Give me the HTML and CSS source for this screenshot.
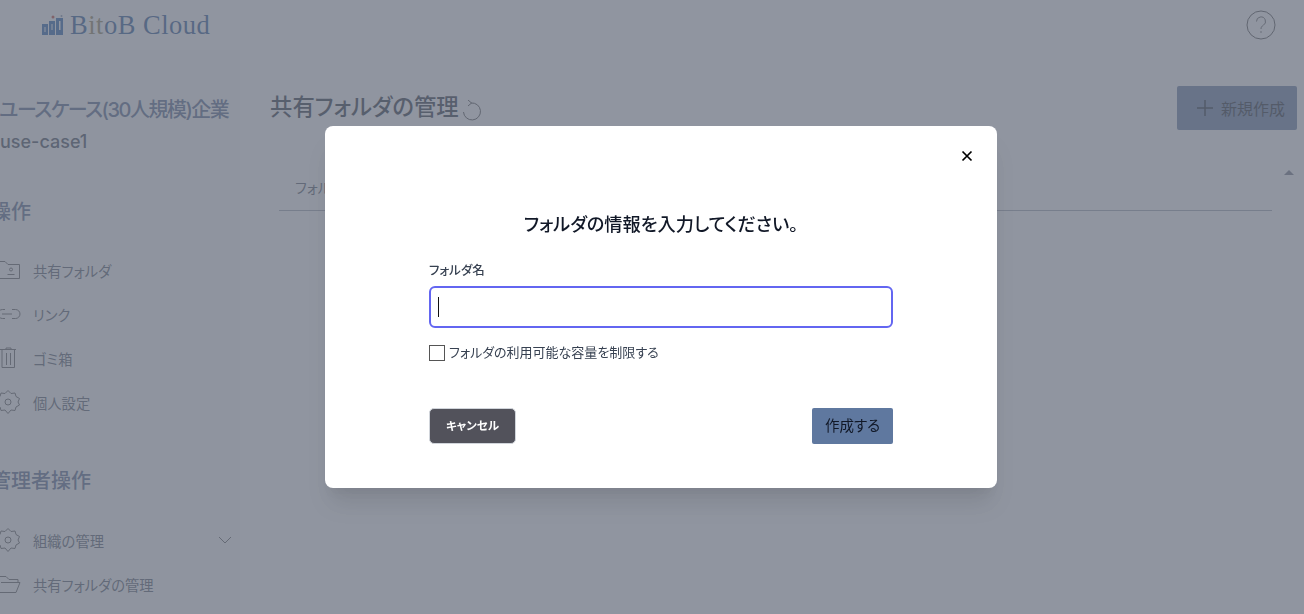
FILE: index.html
```html
<!DOCTYPE html>
<html>
	<head>
		<meta charset="utf-8"/>
		<title>共有フォルダの管理</title>
		<meta name="viewport" content="width=device-width, initial-scale=1"/>
		<link rel="stylesheet" href="styles.css">
	</head>
	<body>
		<div class="app">
			<header class="topbar">
				<div class="logo">
					<svg class="logo-icon" width="22" height="20" viewBox="0 0 22 20">
						<rect x="0" y="9" width="6" height="11" fill="#1a5aa8"/>
						<rect x="7" y="6" width="6" height="14" fill="#1a5aa8"/>
						<rect x="14" y="3" width="7" height="17" fill="#1a5aa8"/>
						<rect x="2.500" y="12" width="1" height="5" fill="#fff"/>
						<rect x="9.500" y="9" width="1" height="6" fill="#fff"/>
						<rect x="17" y="6" width="1.500" height="9" fill="#fff"/>
						<circle cx="11" cy="2" r="1.500" fill="#c0392b"/>
						<circle cx="19.500" cy="1" r="1" fill="#7b8aa6"/>
					</svg>
					<span class="logo-txt">B<span class="logo-i">it</span>oB Cloud</span>
				</div>
				<svg class="help-icon" width="30" height="30" viewBox="0 0 30 30">
					<circle cx="15" cy="15" r="14" fill="none" stroke="#444" stroke-width="1"/>
					<path d="M10.500 11.500a4.500 4.500 0 1 1 6.800 3.800c-1.500 1-2.300 1.800-2.300 3.700" fill="none" stroke="#555" stroke-width="1"/>
					<circle cx="15" cy="22" r="0.800" fill="#555"/>
				</svg>
			</header>
			<div class="main">
				<aside class="sidebar">
					<div class="org-name">ユースケース(30人規模)企業</div>
					<div class="org-id">use-case1</div>
					<div class="side-heading">操作</div>
					<ul class="side-list">
						<li class="side-item">
							<svg class="side-icon" width="24" height="24" viewBox="0 0 24 24" fill="none" stroke="#555"><path d="M0 3.500h7l3 3h11.500v14H0"/><circle cx="13" cy="11.500" r="1.500"/><path d="M9.500 16.500h7"/></svg>
							<span>共有フォルダ</span>
						</li>
						<li class="side-item">
							<svg class="side-icon" width="24" height="24" viewBox="0 0 24 24" fill="none" stroke="#555"><path d="M7 7.500H4.500a4.500 4.500 0 0 0 0 9H7M14 7.500h3.500a4.500 4.500 0 0 1 0 9H14M4 12h10"/></svg>
							<span>リンク</span>
						</li>
						<li class="side-item">
							<svg class="side-icon" width="24" height="24" viewBox="0 0 24 24" fill="none" stroke="#555"><path d="M2 3.500h16M4 3.500v18h12.500v-18M8.500 7v12M12.500 7v12M8 3.500V2h5v1.500"/></svg>
							<span>ゴミ箱</span>
						</li>
						<li class="side-item">
							<svg class="side-icon" width="24" height="24" viewBox="0 0 24 24" fill="none" stroke="#555"><path d="M9 .5l3 3 4-.5 1 3.500 3.500 2-1.500 3.500 1.500 3-3.500 2-1 3.500-4-.5-3 3.500-3-3.500-4 .5-1-3.500-3.500-2 1.500-3-1.500-3.500 3.500-2 1-3.500 4 .5z" transform="translate(1 0)"/><circle cx="10" cy="12" r="3"/></svg>
							<span>個人設定</span>
						</li>
					</ul>
					<div class="side-heading side-heading-admin">管理者操作</div>
					<ul class="side-list">
						<li class="side-item">
							<svg class="side-icon" width="24" height="24" viewBox="0 0 24 24" fill="none" stroke="#555"><path d="M9 .5l3 3 4-.5 1 3.500 3.500 2-1.500 3.500 1.500 3-3.500 2-1 3.500-4-.5-3 3.500-3-3.500-4 .5-1-3.500-3.500-2 1.500-3-1.500-3.500 3.500-2 1-3.500 4 .5z" transform="translate(1 0)"/><circle cx="10" cy="12" r="3"/></svg>
							<span>組織の管理</span>
							<svg class="side-arrow" width="14" height="8" viewBox="0 0 14 8" fill="none" stroke="#555"><path d="M1 1l6 6 6-6"/></svg>
						</li>
						<li class="side-item">
							<svg class="side-icon" width="24" height="24" viewBox="0 0 24 24" fill="none" stroke="#555"><path d="M0 4.500h8l3 3h9v3M0 4.500v16h18l4-10H3"/></svg>
							<span>共有フォルダの管理</span>
						</li>
					</ul>
				</aside>
				<main class="content">
					<div class="content-head">
						<h1 class="page-title">共有フォルダの管理</h1>
						<svg class="reload-icon" width="20" height="22" viewBox="0 0 20 22" fill="none" stroke="#444"><path d="M8 3a8.500 8.500 0 1 1-7.500 9"/><path d="M5 0l3.500 3L5 6"/></svg>
						<button class="new-btn" type="button">
							<svg width="16" height="16" viewBox="0 0 16 16" stroke="#111827" stroke-width="1.500"><path d="M8 0v16M0 8h16"/></svg>
							<span>新規作成</span>
						</button>
					</div>
					<div class="table-head">
						<span>フォルダ名</span>
						<span class="sort-mark"></span>
					</div>
				</main>
			</div>
		</div>

		<div class="overlay">
			<div class="modal">
				<button class="close-btn" type="button">
					<svg width="12" height="12" viewBox="0 0 12 12" stroke="#000" stroke-width="1.700"><path d="M1.500 1.500l9 9M10.500 1.500l-9 9"/></svg>
				</button>
				<h2 class="modal-title">フォルダの情報を入力してください。</h2>
				<label class="field-label">フォルダ名</label>
				<div class="text-box"><span class="caret"></span></div>
				<label class="limit-row">
					<span class="check-box"></span>
					<span>フォルダの利用可能な容量を制限する</span>
				</label>
				<div class="modal-actions">
					<button class="cancel-btn" type="button">キャンセル</button>
					<button class="submit-btn" type="button">作成する</button>
				</div>
			</div>
		</div>
	</body>
</html>
```

FILE: styles.css
```css
html, body{height: 100%;}
body{margin: 0px;overflow: hidden;background: #fff;font-family: Inter, 'Noto Sans CJK JP', sans-serif;font-feature-settings: "palt";color: #111827;}
ul{margin: 0px;padding: 0px;list-style: none;}
h1, h2{margin: 0px;}
button{font-family: inherit;font-feature-settings: inherit;cursor: pointer;}

.app{display: flex;flex-direction: column;height: 614px;overflow: hidden;}
.topbar{display: flex;align-items: center;justify-content: space-between;height: 50px;padding: 0 28px 0 42px;flex-shrink: 0;}
.logo{display: flex;align-items: center;gap: 6px;}
.logo-txt{font-family: 'Liberation Serif', serif;font-size: 26.5px;color: #1f4f90;letter-spacing: 0.5px;}
.logo-i{color: #8a7f55;}

.main{display: flex;flex: 1;min-height: 0;}
.sidebar{width: 240px;flex-shrink: 0;background: #fbfbfb;overflow: hidden;padding-top: 50px;}
.org-name{font-size: 20px;font-weight: 500;color: #4b5f86;line-height: 20px;letter-spacing: -1.5px;margin-left: -1px;white-space: nowrap;}
.org-id{font-size: 18px;font-weight: 500;color: #374151;line-height: 24px;margin-top: 10px;}
.side-heading{font-size: 20px;font-weight: 500;color: #4b5f86;line-height: 26px;margin-left: -9px;margin-top: 45px;}
.side-list{margin-top: 23px;}
.side-item{display: flex;align-items: center;height: 44px;font-size: 14.3px;color: #4b5563;margin-left: -2px;}
.side-heading-admin{margin-top: 44px;}
.side-heading-admin + .side-list{margin-top: 24px;}
.side-icon{flex-shrink: 0;margin-right: 11px;}
.side-arrow{margin-left: auto;margin-right: 8px;}

.content{flex: 1;min-width: 0;padding: 0 7px 0 30px;}
.content-head{display: flex;align-items: flex-start;height: 80px;padding-top: 35px;box-sizing: border-box;}
.page-title{font-size: 22.4px;font-weight: 500;color: #1f2937;line-height: 44px;}
.reload-icon{margin-top: 15px;margin-left: 4px;}
.new-btn{display: flex;align-items: center;gap: 8px;margin-left: auto;height: 44px;width: 120px;margin-top: 1px;padding: 0 0 0 20px;border: 0;border-radius: 2px;background: #5f789f;color: #111827;font-size: 16px;white-space: nowrap;}
.table-head{display: flex;justify-content: space-between;height: 46px;margin: 34px 25px 0 9px;padding-left: 16px;font-size: 14px;color: #4b5563;line-height: 48px;border-bottom: 1px solid #9ca3af;}
.sort-mark{width: 0;height: 0;border-left: 5px solid transparent;border-right: 5px solid transparent;border-bottom: 5px solid #6b7280;margin: 6px -22px 0 0;}

.overlay{position: fixed;top: 0;left: 0;width: 100%;height: 100%;background: rgba(107, 114, 128, 0.75);display: flex;justify-content: center;align-items: flex-start;padding: 126px 0 0 18px;box-sizing: border-box;}
.modal{position: relative;width: 672px;height: 362px;box-sizing: border-box;padding: 84px 104px 0;background: #fff;border-radius: 8px;box-shadow: 0 20px 25px -5px rgba(0,0,0,0.1), 0 10px 10px -5px rgba(0,0,0,0.04);}
.close-btn{position: absolute;top: 24px;right: 24px;display: flex;width: 12px;height: 12px;padding: 0;border: 0;background: none;}
.modal-title{font-size: 18.2px;font-weight: 500;line-height: 28px;text-align: center;color: #111827;}
.field-label{display: block;margin-top: 23px;font-size: 12.5px;font-weight: 500;line-height: 20px;color: #374151;}
.text-box{display: flex;align-items: center;margin-top: 5px;height: 42px;box-sizing: border-box;padding-left: 7px;border: 2px solid #6366f1;border-radius: 6px;}
.caret{width: 1px;height: 20px;background: #111;}
.limit-row{display: flex;align-items: center;gap: 4px;margin-top: 15px;font-size: 13px;line-height: 18px;color: #374151;}
.check-box{width: 14px;height: 14px;border: 1px solid #555;flex-shrink: 0;margin-top: 2px;}
.modal-actions{display: flex;justify-content: space-between;align-items: center;margin-top: 47px;}
.cancel-btn{width: 87px;height: 36px;padding: 0 0 2px;border: 1px solid #d1d5db;border-radius: 5px;background: #52525b;color: #fff;font-size: 11.5px;font-weight: 700;}
.submit-btn{width: 81px;height: 36px;padding: 0 0 4px;border: 0;border-radius: 2px;background: #5f789f;color: #111827;font-size: 14.5px;}
```
